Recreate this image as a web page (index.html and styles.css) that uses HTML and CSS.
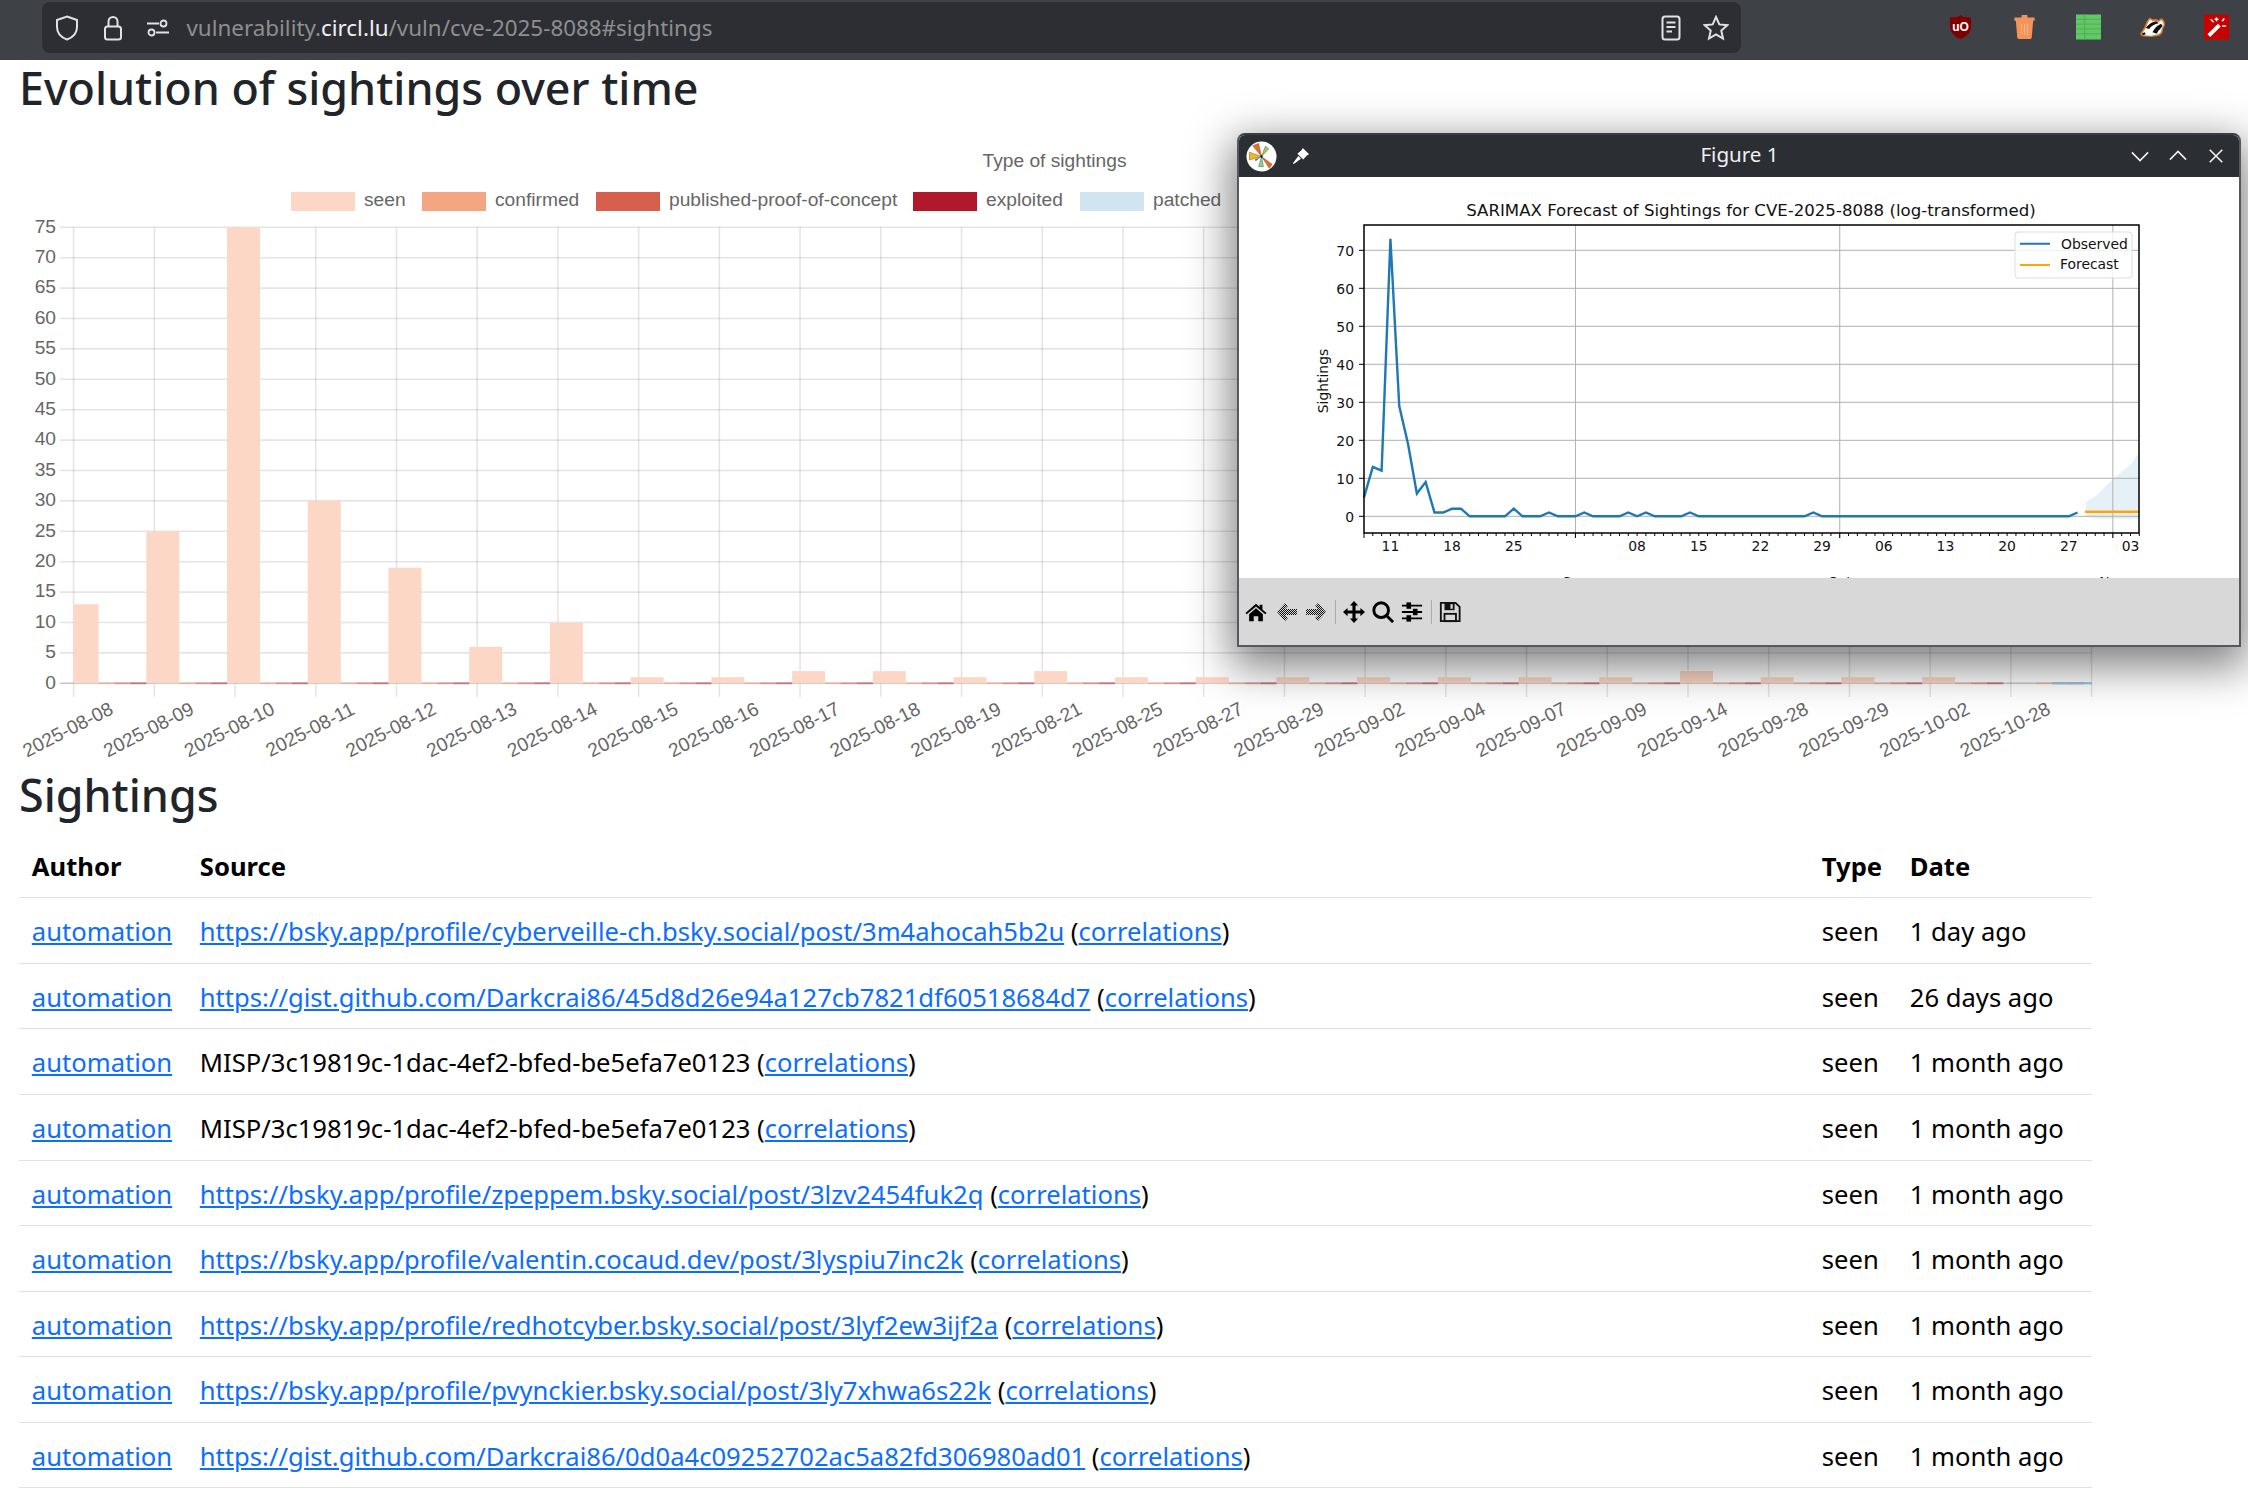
FILE: index.html
```html
<!DOCTYPE html>
<html lang="en">
<head>
    <meta charset="UTF-8">
    <title>CVE-2025-8088 sightings</title>
    <link rel="stylesheet" href="styles.css">
</head>
<body>
    <!-- browser toolbar -->
    <header class="toolbar">
        <div class="urlbar">
            <svg class="ico shield" viewBox="0 0 24 26"><path d="M12 1.5 L22 5 V12 C22 18 17.5 22.5 12 24.5 C6.5 22.5 2 18 2 12 V5 Z"/></svg>
            <svg class="ico lock" viewBox="0 0 20 26"><rect x="2" y="11.5" width="16" height="13" rx="2.5"/><path d="M5.5 11.5 V6.5 a4.5 4.5 0 0 1 9 0 V11.5"/></svg>
            <svg class="ico perms" viewBox="0 0 24 18"><circle cx="17.5" cy="4.5" r="3"/><circle cx="5.5" cy="13.5" r="3"/><path d="M1 4.5 H13 M10 13.5 H23"/></svg>
            <span class="url">vulnerability.<b>circl.lu</b>/vuln/cve-2025-8088#sightings</span>
            <svg class="ico reader" viewBox="0 0 20 26"><rect x="1.5" y="1.5" width="17" height="23" rx="2.5"/><path d="M5.5 7.5 H14.5 M5.5 12 H14.5 M5.5 16.5 H11"/></svg>
            <svg class="ico star" viewBox="0 0 26 26"><path d="M13 2 L16.3 9.4 L24.3 10.2 L18.3 15.6 L20 23.6 L13 19.5 L6 23.6 L7.7 15.6 L1.7 10.2 L9.7 9.4 Z"/></svg>
        </div>
        <div class="addons">
            <svg class="addon" viewBox="0 0 26 26"><path fill="#800000" d="M13 0.5 L16 2.5 L24 3 V13 C24 19 18 23.5 13 25.5 C8 23.5 2 19 2 13 V3 L10 2.5 Z"/><text x="13" y="17.5" class="ub-text">uO</text></svg>
            <svg class="addon" viewBox="0 0 26 26"><path fill="#f4935a" d="M10 0.5 H16 V3 H23.5 V6.5 H22 L20.5 24 Q20.3 25.5 19 25.5 H7 Q5.7 25.5 5.5 24 L4 6.5 H2.5 V3 H10 Z"/><path stroke="#fbb78d" stroke-width="1" d="M10 10 V21 M13 10 V21 M16 10 V21"/></svg>
            <svg class="addon" viewBox="0 0 26 26"><rect width="26" height="26" fill="#62c765"/><path stroke="#4fae55" stroke-width="1" d="M0 5 H26 M0 10 H26 M0 15 H26 M0 20 H26 M9 0 V26"/></svg>
            <svg class="addon" viewBox="0 -3 26 26">
                <path fill="#d97a2b" d="M0 17 L4 11 L7 4 L10 0 L13 2 Q17 1 19 3 L22 1 Q26 2 26 8 L24 12 Q24 17 20 19 L12 20.5 L2 19.5 Z"/>
                <path fill="#fff" d="M2 17 L6 11 L8.5 5 L10.5 2 L13 4 Q17 3 19 5 L22 3 Q24.5 4 24.5 8 L22.5 12 Q22 16.5 19 17.5 L12 19 L3.5 18.5 Z"/>
                <path fill="#111" d="M6 11 Q10 5 17 4 L19.5 6 Q13 7 9.5 12 Z M13 15.5 Q16 9 22 6.5 L23.5 9 L21 12 Q19 13 17.5 17 Z M2 16.5 L5 15.5 L6 17.5 L3 18.5 Z"/>
            </svg>
            <svg class="addon" viewBox="0 0 26 26"><rect width="26" height="26" fill="#c80000"/><path stroke="#fff" stroke-width="4" d="M5 22 L16 11"/><path stroke="#fff" stroke-width="1.6" d="M13 3 V7 M21 4 L19 7 M7 5 L10 8 M23 12 H19 M11 5 H15"/></svg>
        </div>
    </header>

    <h1 class="title">Evolution of sightings over time</h1>
    <svg id="chart" class="chart" viewBox="0 130 2100 640"></svg>

    <h2 class="title">Sightings</h2>
    <table class="table">
        <colgroup>
            <col class="col-author"><col class="col-source"><col class="col-type"><col class="col-date">
        </colgroup>
        <thead>
            <tr><th>Author</th><th>Source</th><th>Type</th><th>Date</th></tr>
        </thead>
        <tbody>
            <tr><td><a href="#">automation</a></td><td><a href="#">https://bsky.app/profile/cyberveille-ch.bsky.social/post/3m4ahocah5b2u</a> (<a href="#">correlations</a>)</td><td>seen</td><td>1 day ago</td></tr>
            <tr><td><a href="#">automation</a></td><td><a href="#">https://gist.github.com/Darkcrai86/45d8d26e94a127cb7821df60518684d7</a> (<a href="#">correlations</a>)</td><td>seen</td><td>26 days ago</td></tr>
            <tr><td><a href="#">automation</a></td><td>MISP/3c19819c-1dac-4ef2-bfed-be5efa7e0123 (<a href="#">correlations</a>)</td><td>seen</td><td>1 month ago</td></tr>
            <tr><td><a href="#">automation</a></td><td>MISP/3c19819c-1dac-4ef2-bfed-be5efa7e0123 (<a href="#">correlations</a>)</td><td>seen</td><td>1 month ago</td></tr>
            <tr><td><a href="#">automation</a></td><td><a href="#">https://bsky.app/profile/zpeppem.bsky.social/post/3lzv2454fuk2q</a> (<a href="#">correlations</a>)</td><td>seen</td><td>1 month ago</td></tr>
            <tr><td><a href="#">automation</a></td><td><a href="#">https://bsky.app/profile/valentin.cocaud.dev/post/3lyspiu7inc2k</a> (<a href="#">correlations</a>)</td><td>seen</td><td>1 month ago</td></tr>
            <tr><td><a href="#">automation</a></td><td><a href="#">https://bsky.app/profile/redhotcyber.bsky.social/post/3lyf2ew3ijf2a</a> (<a href="#">correlations</a>)</td><td>seen</td><td>1 month ago</td></tr>
            <tr><td><a href="#">automation</a></td><td><a href="#">https://bsky.app/profile/pvynckier.bsky.social/post/3ly7xhwa6s22k</a> (<a href="#">correlations</a>)</td><td>seen</td><td>1 month ago</td></tr>
            <tr><td><a href="#">automation</a></td><td><a href="#">https://gist.github.com/Darkcrai86/0d0a4c09252702ac5a82fd306980ad01</a> (<a href="#">correlations</a>)</td><td>seen</td><td>1 month ago</td></tr>
        </tbody>
    </table>

    <!-- matplotlib window on top of the page -->
    <div class="figure-window">
        <div class="titlebar">
            <svg class="mpl-logo" viewBox="0 0 32 32">
                <circle cx="16" cy="16" r="15.5" fill="#fff"/>
                <path fill="#f26a1b" stroke="#333" stroke-width=".4" d="M16 16 L7 5 L13 2.5 Z"/>
                <path fill="#f26a1b" stroke="#333" stroke-width=".4" d="M16 16 L27 24 L24 28 Z"/>
                <path fill="#fdb515" stroke="#333" stroke-width=".4" d="M16 16 L3.5 11.5 L3.5 19.5 Z"/>
                <path fill="#9ccf5d" stroke="#333" stroke-width=".4" d="M16 16 L20 5.5 L23.5 8 Z"/>
                <path fill="#85d67f" stroke="#333" stroke-width=".4" d="M16 16 L13 26.5 L18 26.5 Z"/>
                <path fill="#3a7a9c" d="M16 16 L9 19 L10 21 Z"/>
                <circle cx="16" cy="16" r="1.2" fill="#111"/>
            </svg>
            <svg class="pin" viewBox="0 0 20 20"><path fill="#fff" d="M12 1 L19 8 L16.5 9.5 L12.5 14 L6 7.5 L10.5 3.5 Z M7 10 L10 13 L2 19 L1 18 Z"/></svg>
            <span class="figure-name">Figure 1</span>
            <svg class="win-btn" viewBox="0 0 20 20"><path d="M1 6 L10 15 L19 6"/></svg>
            <svg class="win-btn" viewBox="0 0 20 20"><path d="M1 14 L10 5 L19 14"/></svg>
            <svg class="win-btn" viewBox="0 0 20 20"><path d="M3 3 L17 17 M17 3 L3 17"/></svg>
        </div>
        <svg id="forecast" class="forecast" viewBox="1239 177 1000 401"></svg>
        <div class="mpl-tools">
            <svg class="tool" viewBox="0 0 24 24"><path d="M12 3 L16 6.5 V4 H19 V9.2 L23.5 13 L22 14.5 L12 6 L2 14.5 L.5 13 Z M4.5 14.5 L12 8 L19.5 14.5 V22 H14.5 V16.5 H9.5 V22 H4.5 Z"/></svg>
            <svg class="tool dim first" viewBox="0 0 22 22"><defs><pattern id="dots" width="2" height="2" patternUnits="userSpaceOnUse"><rect width="1" height="1" fill="#111"/><rect x="1" y="1" width="1" height="1" fill="#111"/></pattern></defs><path fill="url(#dots)" d="M1 11 L9 2 L12 5 L9 8 H21 V14 H9 L12 17 L9 20 Z"/></svg>
            <svg class="tool dim" viewBox="0 0 22 22"><path fill="url(#dots)" d="M21 11 L13 2 L10 5 L13 8 H1 V14 H13 L10 17 L13 20 Z"/></svg>
            <span class="tool-sep"></span>
            <svg class="tool" viewBox="0 0 24 24"><path d="M12 0 L16.5 5 H13.7 V10.3 H19 V7.5 L24 12 L19 16.5 V13.7 H13.7 V19 H16.5 L12 24 L7.5 19 H10.3 V13.7 H5 V16.5 L0 12 L5 7.5 V10.3 H10.3 V5 H7.5 Z"/></svg>
            <svg class="tool" viewBox="0 0 24 24"><circle cx="10" cy="10" r="8" fill="none" stroke="#000" stroke-width="3.2"/><path stroke="#000" stroke-width="3.2" d="M15.5 15.5 L23 23"/></svg>
            <svg class="tool" viewBox="0 0 24 24"><path d="M1 4 H23 V6 H1 Z M1 11 H23 V13 H1 Z M1 18 H23 V20 H1 Z"/><rect x="6" y="1.5" width="5" height="7"/><rect x="13" y="8.5" width="5" height="7"/><rect x="6" y="15.5" width="5" height="7"/></svg>
            <span class="tool-sep"></span>
            <svg class="tool" viewBox="0 0 24 24"><path fill="none" stroke="#111" stroke-width="2" d="M2 2 H18 L22.5 6.5 V22 H2 Z"/><rect x="6" y="2" width="11" height="8" fill="#111"/><rect x="12.5" y="3.5" width="2.5" height="5" fill="#d8d8d8"/><rect x="6" y="14" width="12.5" height="8" fill="none" stroke="#111" stroke-width="2"/></svg>
        </div>
    </div>

    <script src="chart.js"></script>
</body>
</html>
```

FILE: styles.css
```css
html, body {
    margin: 0;
    overflow: hidden;
}
body {
    font-family: "Noto Sans", sans-serif;
    font-size: 25.6px;
    line-height: 1.5;
    color: #212529;
    background: #fff;
}

/* browser chrome */
.toolbar {
    height: 60px;
    box-sizing: border-box;
    background: #3e4246;
    display: flex;
    align-items: flex-start;
    padding: 2px 0 0 42px;
}
.urlbar {
    width: 1699px;
    height: 51px;
    box-sizing: border-box;
    background: #2c2e33;
    border-radius: 8px;
    display: flex;
    align-items: center;
    padding-left: 13px;
}
.ico {
    fill: none;
    stroke: #e2e2e4;
    stroke-width: 2;
    flex: none;
}
.shield { width: 24px; height: 26px; }
.lock { width: 20px; height: 26px; margin-left: 24px; }
.perms { width: 24px; height: 18px; margin-left: 23px; stroke-width: 1.8; }
.url {
    margin-left: 16.5px;
    font-size: 22.4px;
    color: #8d8e91;
    white-space: nowrap;
    flex: 1;
}
.url b {
    font-weight: 400;
    color: #f1f1f3;
}
.reader { width: 20px; height: 26px; margin-right: 22px; }
.star { width: 26px; height: 26px; margin-right: 12px; }
.addons {
    display: flex;
    gap: 39px;
    margin: 12px 0 0 207px;
}
.addon {
    width: 25px;
    height: 26px;
}
.ub-text {
    fill: #fff;
    font-family: "Liberation Sans", sans-serif;
    font-size: 12.5px;
    font-weight: 700;
    text-anchor: middle;
}

/* page */
.title {
    margin: 0 0 0 19px;
    font-size: 44.8px;
    font-weight: 500;
    line-height: 1.2;
}
h1.title {
    margin-top: 1.4px;
    margin-bottom: 14.6px;
}
h2.title {
    margin-top: -1.4px;
    margin-bottom: 10.6px;
}
.chart {
    display: block;
    width: 2100px;
    height: 640px;
}
.chart text {
    font-family: "Liberation Sans", sans-serif;
    font-size: 19.2px;
    fill: #666;
}

.table {
    margin-left: 19px;
    width: 2073px;
    table-layout: fixed;
    border-collapse: separate;
    border-spacing: 0;
    color: #000;
}
.col-author { width: 168px; }
.col-type { width: 88px; }
.col-date { width: 195px; }
.table th, .table td {
    padding: 15px 12.8px 11.2px;
    text-align: left;
    border-bottom: 1px solid #dee2e6;
    white-space: nowrap;
}
.table a {
    color: #0d6efd;
}

/* figure window */
.figure-window {
    position: absolute;
    left: 1237px;
    top: 133px;
    width: 1004px;
    height: 514px;
    box-sizing: border-box;
    border: 2px solid #55595d;
    border-top-color: #3a3d41;
    border-radius: 8px 8px 0 0;
    background: #fff;
    box-shadow: 0 14px 44px 6px rgba(0, 0, 0, .5);
    display: flex;
    flex-direction: column;
    overflow: hidden;
}
.titlebar {
    height: 42px;
    flex: none;
    background: #2b2e33;
    display: flex;
    align-items: center;
    padding-left: 7px;
    color: #f0f0f0;
}
.mpl-logo { width: 31px; height: 31px; }
.pin { width: 18px; height: 18px; margin-left: 15px; }
.figure-name {
    flex: 1;
    text-align: center;
    font-size: 20.6px;
    padding-left: 38px;
    padding-bottom: 4px;
}
.win-btn {
    width: 18px;
    height: 18px;
    margin-right: 20px;
    fill: none;
    stroke: #f0f0f0;
    stroke-width: 1.8;
}
.win-btn:last-child { margin-right: 14px; }
.forecast {
    display: block;
    width: 1000px;
    height: 401px;
    flex: none;
}
.forecast text {
    font-family: "DejaVu Sans", sans-serif;
    font-size: 13.9px;
    fill: #111;
}
.forecast .fig-title {
    font-size: 16.6px;
}
.mpl-tools {
    flex: 1;
    background: #d8d8d8;
    display: flex;
    align-items: center;
    padding-left: 6px;
}
.tool {
    width: 22px;
    height: 22px;
    margin-right: 7px;
    fill: #000;
    flex: none;
}
.tool.first { margin-left: 2px; }
.tool-sep {
    width: 1px;
    height: 24px;
    background: #aaa;
    margin: 0 7px 0 1px;
}
```

FILE: chart.js
```js
// both charts are drawn in page pixels, the viewBox takes care of the offset
const NS = 'http://www.w3.org/2000/svg';

function add(svg, tag, attrs, text) {
    const el = document.createElementNS(NS, tag);
    for (const k in attrs) el.setAttribute(k, attrs[k]);
    if (text !== undefined) el.textContent = text;
    svg.appendChild(el);
    return el;
}

// ---- sightings bar chart ----
const chart = document.getElementById('chart');
const dates = ['2025-08-08','2025-08-09','2025-08-10','2025-08-11','2025-08-12','2025-08-13','2025-08-14','2025-08-15',
    '2025-08-16','2025-08-17','2025-08-18','2025-08-19','2025-08-21','2025-08-25','2025-08-27','2025-08-29','2025-09-02',
    '2025-09-04','2025-09-07','2025-09-09','2025-09-14','2025-09-28','2025-09-29','2025-10-02','2025-10-28'];
const seen = [13,25,75,30,19,6,10,1,1,2,2,1,2,1,1,1,1,1,1,1,2,1,1,1,0];
const colors = { seen: '#fdd7c6', confirmed: '#f4a582', published: '#d6604d', exploited: '#b2182b', patched: '#d1e5f0' };

const x0 = 73.6, stepX = 80.72, y0 = 683.3, stepY = 30.4;
const gridColor = 'rgba(0,0,0,.1)';

for (let v = 0; v <= 75; v += 5) {
    const y = y0 - stepY * v / 5;
    add(chart, 'line', { x1: 60, x2: 2092, y1: y, y2: y, stroke: v ? gridColor : 'rgba(0,0,0,.22)', 'stroke-width': 1.6 });
    add(chart, 'text', { x: 56, y: y + 5.2, 'text-anchor': 'end' }, v);
}
for (let i = 0; i <= dates.length; i++) {
    const x = x0 + stepX * i;
    add(chart, 'line', { x1: x, x2: x, y1: 227, y2: 697, stroke: gridColor, 'stroke-width': 1.6 });
}
dates.forEach((d, i) => {
    const start = x0 + stepX * i - 8;
    const left = Math.max(start, x0);
    const h = stepY * seen[i] / 5;
    // empty datasets still leave a flat line on the axis
    [colors.confirmed, colors.published, colors.exploited].forEach((c, n) => {
        add(chart, 'rect', { x: start + 33 + n * 16, y: y0 - 1, width: 16, height: 2, fill: c, opacity: .45 });
    });
    if (seen[i]) add(chart, 'rect', { x: left, y: y0 - h, width: start + 33 - left, height: h, fill: colors.seen });
    const cx = x0 + stepX * i - 5.5;
    add(chart, 'text', { x: cx, y: 736, 'text-anchor': 'middle', transform: `rotate(-27 ${cx} 730)` }, d);
});
add(chart, 'rect', { x: 2052, y: y0 - 1, width: 40, height: 2, fill: '#92c5de' });

add(chart, 'text', { x: 1054.5, y: 166.5, 'text-anchor': 'middle' }, 'Type of sightings');
[['seen', 291, colors.seen], ['confirmed', 422, colors.confirmed], ['published-proof-of-concept', 596, colors.published],
 ['exploited', 913, colors.exploited], ['patched', 1080, colors.patched]].forEach(([name, x, c]) => {
    add(chart, 'rect', { x: x, y: 192, width: 64, height: 19, fill: c });
    add(chart, 'text', { x: x + 73, y: 206 }, name);
});

// ---- SARIMAX forecast ----
const fig = document.getElementById('forecast');
const left = 1364, right = 2139, top_ = 225, bottom = 533, zeroY = 516.3, perDay = 8.81;
const dayX = d => left + perDay * d;
const valY = v => zeroY - 3.8 * v;

add(fig, 'text', { x: 1751, y: 216, 'text-anchor': 'middle', class: 'fig-title' }, 'SARIMAX Forecast of Sightings for CVE-2025-8088 (log-transformed)');
add(fig, 'polygon', { points: '2086,502 2097,495 2113,479 2130,465 2139,453 2139,519 2100,519 2086,517', fill: '#e5f1f6' });

for (let v = 0; v <= 70; v += 10) {
    const y = valY(v);
    add(fig, 'line', { x1: left, x2: right, y1: y, y2: y, stroke: '#b0b0b0', 'stroke-width': 1 });
    add(fig, 'line', { x1: left - 5, x2: left, y1: y, y2: y, stroke: '#000', 'stroke-width': 1 });
    add(fig, 'text', { x: 1354, y: y + 5.5, 'text-anchor': 'end' }, v);
}
[24, 54, 85].forEach(d => {
    add(fig, 'line', { x1: dayX(d), x2: dayX(d), y1: top_, y2: bottom + 5, stroke: '#b0b0b0', 'stroke-width': 1 });
});
for (let d = 0; d <= 88; d++) {
    const major = d === 0 || d === 24 || d === 54 || d === 85;
    add(fig, 'line', { x1: dayX(d), x2: dayX(d), y1: bottom, y2: bottom + (major ? 5 : 3), stroke: '#000', 'stroke-width': 1 });
}
[[3,'11'],[10,'18'],[17,'25'],[31,'08'],[38,'15'],[45,'22'],[52,'29'],[59,'06'],[66,'13'],[73,'20'],[80,'27'],[87,'03']].forEach(([d, t]) => {
    add(fig, 'text', { x: dayX(d), y: 551, 'text-anchor': 'middle' }, t);
});
// month labels sit below the visible part of the canvas
[[24,'Sep'],[54,'Oct'],[85,'Nov']].forEach(([d, t]) => {
    add(fig, 'text', { x: dayX(d), y: 586.5, 'text-anchor': 'middle' }, t);
});
add(fig, 'text', { x: 1328, y: 381, 'text-anchor': 'middle', transform: 'rotate(-90 1328 381)' }, 'Sightings');

const obs = [5,13,12,73,29,19,6,9,1,1,2,2,0,0,0,0,0,2,0,0,0,1,0,0,0,1,0,0,0,0,1,0,1,0,0,0,0,1];
while (obs.length < 81) obs.push(obs.length === 51 ? 1 : 0);
obs.push(1);
add(fig, 'polyline', { points: obs.map((v, d) => dayX(d) + ',' + valY(v)).join(' '), fill: 'none', stroke: '#1f77b4', 'stroke-width': 2.4 });
add(fig, 'line', { x1: 2085, x2: 2139, y1: 511.7, y2: 511.7, stroke: '#ffa500', 'stroke-width': 2.4 });

add(fig, 'rect', { x: left, y: top_, width: right - left, height: bottom - top_, fill: 'none', stroke: '#000', 'stroke-width': 1.5 });

add(fig, 'rect', { x: 2015, y: 232, width: 117, height: 46, rx: 3, fill: 'rgba(255,255,255,.8)', stroke: '#ddd', 'stroke-width': 1 });
add(fig, 'line', { x1: 2020, x2: 2050, y1: 243.7, y2: 243.7, stroke: '#1f77b4', 'stroke-width': 2 });
add(fig, 'line', { x1: 2020, x2: 2050, y1: 265, y2: 265, stroke: '#ffa500', 'stroke-width': 2 });
add(fig, 'text', { x: 2061, y: 249 }, 'Observed');
add(fig, 'text', { x: 2060, y: 269 }, 'Forecast');
```
